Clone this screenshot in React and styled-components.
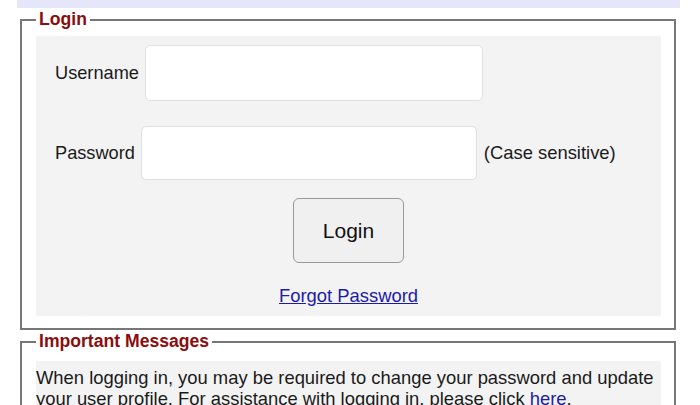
import styled, { createGlobalStyle } from "styled-components";

const GlobalStyle = createGlobalStyle`
  body {
    margin: 0;
    background: #fff;
    font-family: "Liberation Sans", Arial, sans-serif;
    color: #1a1a1a;
  }
`;

function App() {
  return (
    <>
      <GlobalStyle />
      <TopBar />
      <Panel>
        <Legend>Login</Legend>
        <FormBox>
          <FieldRow>
            <Label htmlFor="username">Username</Label>
            <TextInput id="username" type="text" $width={338} $height={56} />
          </FieldRow>
          <FieldRow $gap={25}>
            <Label htmlFor="password">Password</Label>
            <TextInput id="password" type="password" $width={336} $height={54} />
            <Hint>(Case sensitive)</Hint>
          </FieldRow>
          <LoginButton type="button">Login</LoginButton>
          <LinkRow>
            <Link href="#">Forgot Password</Link>
          </LinkRow>
        </FormBox>
      </Panel>
      <Panel>
        <Legend>Important Messages</Legend>
        <MessageBox>
          When logging in, you may be required to change your password and update
          your user profile. For assistance with logging in, please click{" "}
          <Link href="#">here</Link>.
        </MessageBox>
      </Panel>
    </>
  );
}

const TopBar = styled.div`
  margin: 0 20px 0 17px;
  height: 8px;
  background: #e6e6fa;
`;

const Panel = styled.fieldset`
  margin: 1px 0 0 20px;
  width: 656px;
  box-sizing: border-box;
  border: 2px solid #777;
  padding: 6px 13px 12px 14px;
  min-inline-size: 0;
`;

const Legend = styled.legend`
  padding: 0 3px;
  font-size: 17.6px;
  font-weight: bold;
  color: #8b0d0d;
  line-height: 21px;
`;

const FormBox = styled.div`
  background: #f3f3f3;
  padding: 9px 19px 10px;
  display: flex;
  flex-direction: column;
`;

const FieldRow = styled.div`
  display: flex;
  align-items: center;
  margin-top: ${(p) => p.$gap || 0}px;
`;

const Label = styled.label`
  font-size: 18.2px;
  margin-right: 6px;
`;

const TextInput = styled.input`
  width: ${(p) => p.$width}px;
  height: ${(p) => p.$height}px;
  box-sizing: border-box;
  background: #fff;
  border: 1px solid #e0e0e0;
  border-radius: 5px;
  font-size: 18px;
  padding: 0 8px;
  outline: none;
`;

const Hint = styled.span`
  font-size: 18.4px;
  margin-left: 7px;
`;

const LoginButton = styled.button`
  align-self: center;
  margin-top: 18px;
  width: 111px;
  height: 65px;
  background: #f0f0f0;
  border: 1px solid #999;
  border-radius: 6px;
  font-family: "Liberation Sans", Arial, sans-serif;
  font-size: 21px;
  color: #111;
  cursor: pointer;
`;

const LinkRow = styled.div`
  text-align: center;
  margin-top: 22px;
  font-size: 18.4px;
  line-height: 21px;
`;

const Link = styled.a`
  color: #1c1ca8;
  text-decoration: underline;
`;

const MessageBox = styled.div`
  background: #f3f3f3;
  margin-top: 3px;
  padding: 6px 0;
  font-size: 18.4px;
  line-height: 21px;
`;

export default App;
